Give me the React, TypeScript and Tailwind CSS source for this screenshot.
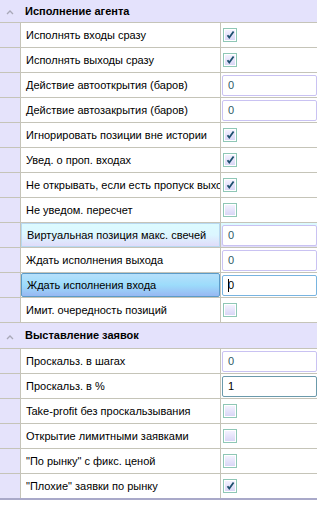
import React from "react";

type Kind = "check" | "empty" | "input";

type Row = {
  label: string;
  kind: Kind;
  value?: string;
  state?: "hover" | "selected";
  dark?: boolean;
};

const agentRows: Row[] = [
  { label: "Исполнять входы сразу", kind: "check" },
  { label: "Исполнять выходы сразу", kind: "check" },
  { label: "Действие автооткрытия (баров)", kind: "input", value: "0" },
  { label: "Действие автозакрытия (баров)", kind: "input", value: "0" },
  { label: "Игнорировать позиции вне истории", kind: "check" },
  { label: "Увед. о проп. входах", kind: "check" },
  { label: "Не открывать, если есть пропуск выхода", kind: "check" },
  { label: "Не уведом. пересчет", kind: "empty" },
  { label: "Виртуальная позиция макс. свечей", kind: "input", value: "0", state: "hover" },
  { label: "Ждать исполнения выхода", kind: "input", value: "0" },
  { label: "Ждать исполнения входа", kind: "input", value: "0", state: "selected" },
  { label: "Имит. очередность позиций", kind: "empty" },
];

const orderRows: Row[] = [
  { label: "Проскальз. в шагах", kind: "input", value: "0" },
  { label: "Проскальз. в %", kind: "input", value: "1", dark: true },
  { label: "Take-profit без проскальзывания", kind: "empty" },
  { label: "Открытие лимитными заявками", kind: "empty" },
  { label: "\"По рынку\" с фикс. ценой", kind: "empty" },
  { label: "\"Плохие\" заявки по рынку", kind: "check" },
];

const CheckBox = ({ checked }: { checked: boolean }) => (
  <div className="ml-[1px] w-[14px] h-[14px] border border-[#8fc7b6] bg-white p-[1px]">
    <div className="relative w-full h-full bg-gradient-to-b from-[#f4f2ff] to-[#d9d6f6]">
      {checked && (
        <svg viewBox="0 0 10 10" className="absolute left-0 top-0 w-[10px] h-[10px]">
          <path d="M2.5 5.2 L4.3 7.6 L8.6 1.6" fill="none" stroke="#1d4f6e" strokeWidth="1.8" />
        </svg>
      )}
    </div>
  </div>
);

const Input = ({ row }: { row: Row }) => {
  const focused = row.state === "selected";
  const border = focused
    ? "border-[#78b4e0]"
    : row.dark
      ? "border-[#6b9aab]"
      : "border-[#c9c2f2]";
  const text = focused || row.dark ? "text-black" : "text-[#2e5a66]";
  return (
    <div
      className={`flex items-center h-[21px] w-full rounded-[2px] border ${border} bg-white pl-[5px] text-[11px] ${text}`}
    >
      {focused && <span className="w-[1px] h-[13px] bg-black -mr-[1px]" />}
      {row.value}
    </div>
  );
};

const Cell = ({ row }: { row: Row }) => {
  let left = "bg-white";
  let right = "bg-white";
  if (row.state === "hover") {
    left = "bg-gradient-to-b from-[#dcfbff] via-[#dcf6ff] to-[#e0dcfa] border border-[#b8d8f0]";
    right = "bg-gradient-to-b from-[#dcfbff] to-[#e0dcfa]";
  }
  if (row.state === "selected") {
    left =
      "bg-gradient-to-b from-[#b6e0fb] via-[#9cdcfb] to-[#98b8f2] border border-[#5b9bc8] rounded-[2px]";
  }
  return (
    <div className="flex h-[25px] border-b border-[#c5c4b8]">
      <div className="w-[20px] shrink-0 bg-[#e5e3fb]" />
      <div className="w-[201px] shrink-0 border-l border-r border-[#c5c4b8] flex">
        <div className={`flex items-center w-full h-full pl-[5px] overflow-hidden whitespace-nowrap ${left}`}>
          <span className="text-[11px] text-black">{row.label}</span>
        </div>
      </div>
      <div className={`flex-1 flex items-center pl-[1px] pr-0 ${right}`}>
        {row.kind === "input" ? <Input row={row} /> : <CheckBox checked={row.kind === "check"} />}
      </div>
    </div>
  );
};

const Header = ({ title, tall }: { title: string; tall?: boolean }) => (
  <div
    className={`flex items-center bg-[#e4e2fc] border-b border-[#c5c4b8] ${tall ? "h-[26px]" : "h-[23px]"}`}
  >
    <div className="w-[20px] flex justify-center">
      <svg viewBox="0 0 8 5" className="w-[8px] h-[5px] mt-[3px]">
        <path d="M1 4 L4 1 L7 4" fill="none" stroke="#a8a8b8" strokeWidth="1.3" />
      </svg>
    </div>
    <span className="pl-[5px] text-[11px] font-bold text-black">{title}</span>
  </div>
);

const App = () => {
  return (
    <div
      className="w-[317px] h-[516px] bg-white overflow-hidden"
      style={{ fontFamily: "'Liberation Sans', Arial, sans-serif" }}
    >
      <Header title="Исполнение агента" />
      {agentRows.map((r) => (
        <Cell key={r.label} row={r} />
      ))}
      <Header title="Выставление заявок" tall />
      {orderRows.map((r) => (
        <Cell key={r.label} row={r} />
      ))}
      <div className="h-[2px] bg-[#a9a9c9] -mt-[1px]" />
    </div>
  );
};

export default App;
